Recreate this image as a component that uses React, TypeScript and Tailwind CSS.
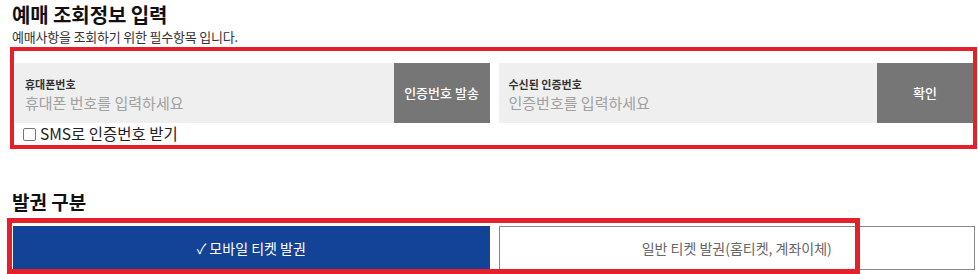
import { useState } from "react";

const FONT = "font-['Noto_Sans_CJK_KR','Noto_Sans',sans-serif]";

// 입력 필드 + 오른쪽 회색 버튼
function AuthField({ label, placeholder, action }: { label: string; placeholder: string; action: string }) {
  return (
    <div className="flex h-[60px] bg-[#efefef]">
      <div className="flex flex-1 flex-col justify-center pl-[10px] pt-[3px]">
        <span className="text-[11px] leading-[14px] font-bold text-[#333]">{label}</span>
        <input
          type="text"
          placeholder={placeholder}
          className="mt-[2px] w-full bg-transparent text-[15px] leading-[20px] text-[#333] placeholder:text-[#a0a0a0] outline-none"
        />
      </div>
      <button className="w-[96px] shrink-0 bg-[#767676] text-[13px] font-medium text-white">{action}</button>
    </div>
  );
}

export default function App() {
  const [mobile, setMobile] = useState(true);

  return (
    <div className={`relative h-[274px] w-[978px] overflow-hidden bg-white text-[#111] ${FONT}`}>
      {/* 예매 조회정보 */}
      <div className="pl-[12px]">
        <h2 className="text-[20px] leading-[29px] font-bold tracking-[-0.1px] text-[#111]">예매 조회정보 입력</h2>
        <p className="text-[13px] leading-[16px] tracking-[-0.2px] text-[#333]">예매사항을 조회하기 위한 필수항목 입니다.</p>
      </div>

      <div className="mt-[18px] pl-[15px] pr-[5px]">
        <div className="grid grid-cols-2 gap-[9px]">
          <AuthField label="휴대폰번호" placeholder="휴대폰 번호를 입력하세요" action="인증번호 발송" />
          <AuthField label="수신된 인증번호" placeholder="인증번호를 입력하세요" action="확인" />
        </div>
        <label className="flex h-[22px] items-center gap-[4px] pl-[8px] text-[15.5px] text-[#222]">
          <span className="h-[13px] w-[13px] rounded-[2px] border border-[#777] bg-white" />
          SMS로 인증번호 받기
        </label>
      </div>

      {/* 발권 구분 */}
      <h2 className="mt-[44px] pl-[12px] text-[19px] leading-[26px] font-bold text-[#111]">발권 구분</h2>
      <div className="mt-[11px] grid grid-cols-2 gap-[9px] pl-[13px] pr-[3px]">
        <button
          onClick={() => setMobile(true)}
          className={`h-[44px] text-[14px] ${mobile ? "bg-[#134396] text-white" : "border border-[#888] bg-white text-[#666]"}`}
        >
          ✓ 모바일 티켓 발권
        </button>
        <button
          onClick={() => setMobile(false)}
          className={`h-[44px] text-[14px] ${!mobile ? "bg-[#134396] text-white" : "border border-[#888] bg-white text-[#666]"}`}
        >
          일반 티켓 발권(홈티켓, 계좌이체)
        </button>
      </div>

      {/* 강조 표시 (빨간 박스) */}
      <div className="pointer-events-none absolute left-[10px] top-[47px] h-[102px] w-[967px] border-[4px] border-[#e5202b]" />
      <div className="pointer-events-none absolute left-[7px] top-[218px] h-[56px] w-[853px] border-[5px] border-[#e5202b]" />
    </div>
  );
}
